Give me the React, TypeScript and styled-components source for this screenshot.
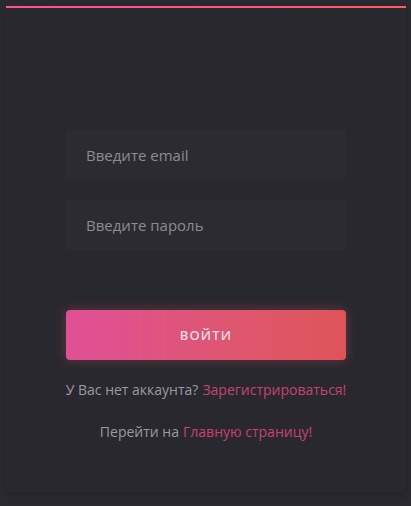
import React, { useState } from "react";
import styled, { createGlobalStyle } from "styled-components";

const GlobalStyle = createGlobalStyle`
    html, body {
        margin: 0;
        padding: 0;
        background: #2a292f;
        font-family: "Open Sans", "Liberation Sans", sans-serif;
    }
    * {
        box-sizing: border-box;
    }
`;

const Page = styled.main`
    min-height: 506px;
    padding: 6px 5px 14px 6px;
`;

const Card = styled.div`
    position: relative;
    width: 400px;
    height: 486px;
    background: #29282e;
    box-shadow: 0 2px 6px rgba(0, 0, 0, 0.18);
    padding: 124px 60px 0;

    &::before {
        content: "";
        position: absolute;
        left: 0;
        right: 0;
        top: 0;
        height: 2px;
        background: linear-gradient(90deg, #ff4f9a, #ff5a5f);
    }
`;

const Form = styled.form`
    display: flex;
    flex-direction: column;
    gap: 20px;
`;

const Input = styled.input`
    height: 50px;
    width: 100%;
    padding: 0 20px;
    border: none;
    outline: none;
    background: #2c2b31;
    color: #c9c9cf;
    font-family: inherit;
    font-size: 15px;

    &::placeholder {
        color: #8a8c96;
    }
`;

const SubmitBtn = styled.button`
    margin-top: 40px;
    height: 50px;
    width: 100%;
    border: none;
    border-radius: 4px;
    background: linear-gradient(90deg, #df5096, #df5670 60%, #df5458);
    box-shadow: 0 0 12px rgba(223, 80, 110, 0.35);
    color: #e8dde1;
    font-family: inherit;
    font-size: 13px;
    font-weight: 600;
    letter-spacing: 1.2px;
    text-transform: uppercase;
    cursor: pointer;
`;

const Note = styled.p<{ $gap: number }>`
    margin: ${(p) => p.$gap}px -20px 0;
    display: flex;
    justify-content: center;
    gap: 4px;
    white-space: nowrap;
    font-size: 14px;
    line-height: 20px;
    color: #9a9aa0;
`;

const Link = styled.a`
    color: #c8436f;
    text-decoration: none;
`;

const App = () => {
    const [email, setEmail] = useState("");
    const [password, setPassword] = useState("");

    return (
        <>
            <GlobalStyle />
            <Page>
                <Card>
                    <Form onSubmit={(e) => e.preventDefault()}>
                        <Input
                            type="email"
                            placeholder="Введите email"
                            value={email}
                            onChange={(e) => setEmail(e.target.value)}
                        />
                        <Input
                            type="password"
                            placeholder="Введите пароль"
                            value={password}
                            onChange={(e) => setPassword(e.target.value)}
                        />
                        <SubmitBtn type="submit">Войти</SubmitBtn>
                    </Form>
                    <Note $gap={20}>
                        <span>У Вас нет аккаунта?</span>
                        <Link href="#">Зарегистрироваться!</Link>
                    </Note>
                    <Note $gap={22}>
                        <span>Перейти на</span>
                        <Link href="#">Главную страницу!</Link>
                    </Note>
                </Card>
            </Page>
        </>
    );
};

export default App;
